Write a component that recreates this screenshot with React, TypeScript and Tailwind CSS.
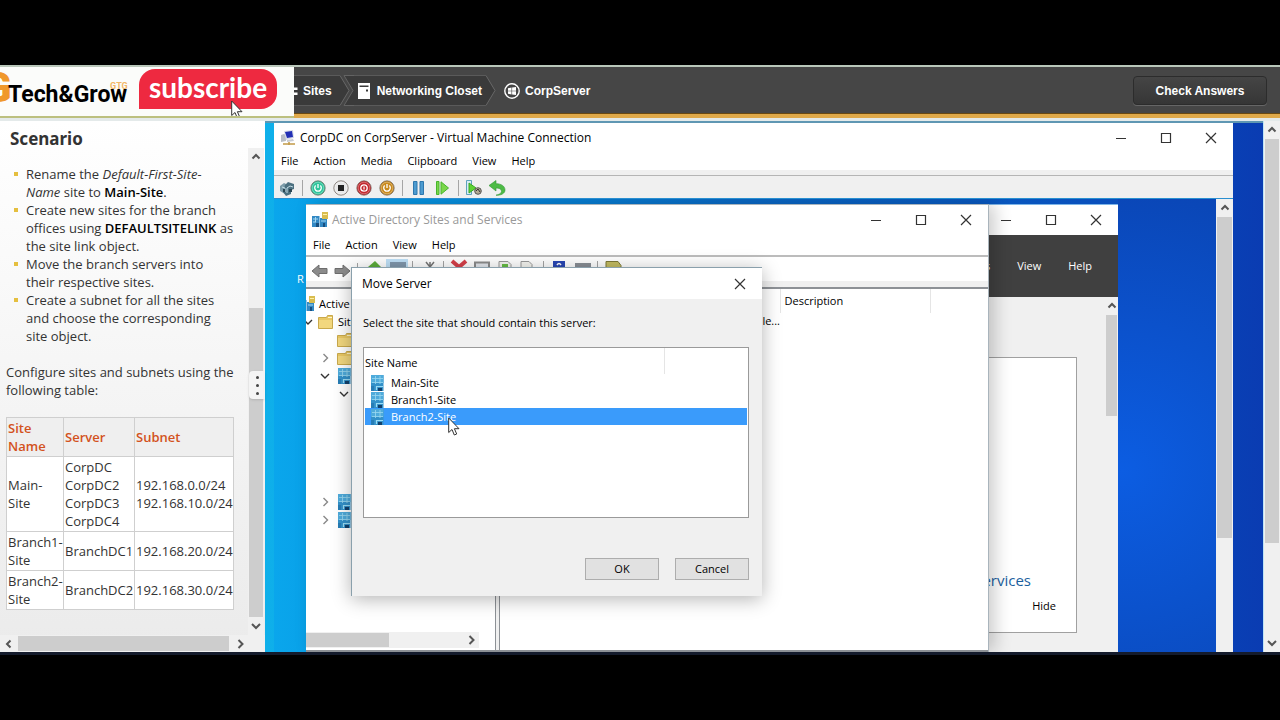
import { useState } from "react";
import type { ReactNode } from "react";
import clsx from "clsx";

const MENU_VM = ["File", "Action", "Media", "Clipboard", "View", "Help"];
const MENU_MMC = ["File", "Action", "View", "Help"];
const SITES = ["Main-Site", "Branch1-Site", "Branch2-Site"];

const SUBNETS = [
  {
    site: "Main-Site",
    servers: ["CorpDC", "CorpDC2", "CorpDC3", "CorpDC4"],
    subnets: ["192.168.0.0/24", "192.168.10.0/24"],
  },
  { site: "Branch1-Site", servers: ["BranchDC1"], subnets: ["192.168.20.0/24"] },
  { site: "Branch2-Site", servers: ["BranchDC2"], subnets: ["192.168.30.0/24"] },
];

export default function App() {
  return (
    <div className="h-screen bg-black py-[65px] font-['Open_Sans',sans-serif] text-[11px] leading-4 text-black">
      <div className="flex h-full flex-col overflow-hidden border-b-3 border-[#141b2c] bg-[#e4eaea]">
        <TopBar />
        <div className="flex min-h-0 flex-1 pt-[3px]">
          <ScenarioPanel />
          <LabDesktop />
          <VScroll className="w-[17px] border-l border-[#bfe4f5]" thumb="mb-[91px]" top down />
        </div>
      </div>
    </div>
  );
}

function TopBar() {
  return (
    <header className="flex h-[53px] shrink-0 border-t-2 border-[#b9c7ba] bg-[#464646] font-['Liberation_Sans',sans-serif] text-[12px] font-bold text-white">
      <ChannelLogo />
      <div className="flex min-w-0 flex-1 items-center justify-between border-b-4 border-[#dfa94a] pr-[13px] shadow-[inset_0_-1px_0_#6b4a12]">
        <nav className="flex items-center">
          <a href="#sites" className="flex h-[31px] items-center border-y border-[#5a5a5a] bg-[#3a3a3a] pr-2">
            <svg className="mr-1 h-3 w-[5px]" viewBox="0 0 5 12">
              <path d="M0 2.500h3.500v2.500H0zM0 7.500h3.500V10H0z" fill="#fff" />
            </svg>
            Sites
          </a>
          <CrumbArrow next="#3a3a3a" />
          <a href="#closet" className="flex h-[31px] items-center border-y border-[#5a5a5a] bg-[#3a3a3a] pr-1 pl-1">
            <svg className="mr-[7px] h-4 w-3" viewBox="0 0 12 16">
              <path d="M0 0h12v16H0z" fill="#fff" />
              <path d="M1.500 2.500h9v1.500h-9zM8 6.500h2v2H8z" fill="#3a3a3a" />
            </svg>
            Networking Closet
          </a>
          <CrumbArrow next="none" />
          <a href="#server" className="flex items-center pl-1">
            <svg className="mr-[5px] size-4" viewBox="0 0 16 16">
              <circle cx="8" cy="8" r="7.200" fill="none" stroke="#fff" strokeWidth="1.400" />
              <path d="M4 5.200l3.500-.6v3.100H4zM8.100 4.500L12 3.900v3.800H8.100zM4 8.300h3.500v3.100L4 10.800zM8.100 8.300H12v3.800l-3.900-.6z" fill="#fff" />
            </svg>
            CorpServer
          </a>
        </nav>
        <button className="h-[29px] w-[134px] rounded-sm border border-[#2c2c2c] bg-linear-to-b from-[#454545] to-[#363636] shadow-[0_1px_0_#666]">
          Check Answers
        </button>
      </div>
    </header>
  );
}

function CrumbArrow({ next }: { next: string }) {
  return (
    <svg className="h-[31px] w-[14px] shrink-0" viewBox="0 0 14 31">
      <path d="M0 0L9 15.500L0 31z" fill="#3a3a3a" />
      <path d="M4 0H14V31H4L13 15.500z" fill={next} />
      <path d="M0 .5L9 15.500L0 30.500" fill="none" stroke="#686868" />
      {next !== "none" && (
        <path d="M14 .5H4L13 15.500L4 30.500H14" fill="none" stroke="#636363" />
      )}
    </svg>
  );
}

function ChannelLogo() {
  return (
    <div className="relative flex w-[294px] shrink-0 items-center overflow-hidden border-b-2 border-[#bcc07f] bg-[#fbfcfa] text-black">
      <span className="absolute -top-[3px] -left-[17px] font-['Roboto',sans-serif] text-[42px] leading-12 font-black text-[#f0982b]">
        G
      </span>
      <span className="relative pt-[6px] pl-[8px] font-['Roboto',sans-serif] text-[23px] leading-7">
        Tech&amp;Grow
      </span>
      <span className="absolute top-[11px] left-[110px] font-['Roboto',sans-serif] text-[9px] text-[#f2b768]">
        GTG
      </span>
      <button className="absolute top-[2px] left-[139px] h-10 w-[138px] rounded-[16px] rounded-bl-none bg-[#ee2940] pb-1 font-['Lato',sans-serif] text-[28px] leading-8 text-white">
        subscribe
      </button>
      <Cursor className="absolute top-[33px] left-[231px]" />
    </div>
  );
}

function ScenarioPanel() {
  return (
    <aside className="flex w-[265px] shrink-0 flex-col bg-linear-to-b from-white to-[#ebebeb] text-[13px] leading-[18px] text-[#333]">
      <h1 className="h-[27px] shrink-0 pt-[9px] pl-[10px] font-['Noto_Sans',sans-serif] text-[17px] font-bold">
        Scenario
      </h1>
      <div className="flex min-h-0 flex-1">
        <div className="flex w-[248px] flex-col">
          <div className="min-h-0 flex-1 overflow-hidden pt-[17px] pr-[13px] pl-[6px]">
            <ul className="pl-5">
              <Bullet>
                Rename the <em>Default-First-Site-Name</em> site to <Strong>Main-Site</Strong>.
              </Bullet>
              <Bullet>
                Create new sites for the branch offices using <Strong>DEFAULTSITELINK</Strong> as the
                site link object.
              </Bullet>
              <Bullet>Move the branch servers into their respective sites.</Bullet>
              <Bullet>
                Create a subnet for all the sites and choose the corresponding site object.
              </Bullet>
            </ul>
            <p className="mt-[18px] mb-[18px]">Configure sites and subnets using the following table:</p>
            <SubnetTable />
          </div>
          <HScroll className="h-[17px]" thumb="mr-[6px]" left />
        </div>
        <div className="relative flex w-[17px] flex-col">
          <VScroll className="w-4 flex-1" thumb="mt-[142px]" top down />
          <div className="h-[17px] bg-[#f0f0f0]" />
          <div className="absolute top-[223px] left-px flex h-7 w-4 flex-col items-center justify-center gap-[5px] rounded-l-sm bg-[#f4f4f4] shadow-sm">
            <i className="size-[3px] rounded-full bg-[#444]" />
            <i className="size-[3px] rounded-full bg-[#444]" />
            <i className="size-[3px] rounded-full bg-[#444]" />
          </div>
        </div>
      </div>
    </aside>
  );
}

function Bullet({ children }: { children: ReactNode }) {
  return (
    <li className="relative before:absolute before:top-[7px] before:-left-3 before:size-1 before:bg-[#e5bf3f]">
      {children}
    </li>
  );
}

function Strong({ children }: { children: ReactNode }) {
  return <strong className="font-semibold text-black">{children}</strong>;
}

function SubnetTable() {
  const cell = "border border-[#cfcfcf] p-px text-left";
  return (
    <table className="w-[228px] table-fixed border-collapse bg-white">
      <thead className="bg-[#efefef] text-[#d3521d]">
        <tr>
          <th className={clsx(cell, "w-[57px] font-semibold")}>Site Name</th>
          <th className={clsx(cell, "w-[71px] font-semibold")}>Server</th>
          <th className={clsx(cell, "font-semibold")}>Subnet</th>
        </tr>
      </thead>
      <tbody>
        {SUBNETS.map((row) => (
          <tr key={row.site}>
            <td className={cell}>{row.site}</td>
            <td className={cell}>
              {row.servers.map((s) => (
                <div key={s}>{s}</div>
              ))}
            </td>
            <td className={cell}>
              {row.subnets.map((s) => (
                <div key={s}>{s}</div>
              ))}
            </td>
          </tr>
        ))}
      </tbody>
    </table>
  );
}

function LabDesktop() {
  return (
    <main className="flex min-w-0 flex-1 border-t-2 border-[#5f97b3] bg-linear-to-r from-[#0fb0ea] via-[#0c6ed6] to-[#0a3cb2] pr-[30px] pl-[9px]">
      <section className="flex min-w-0 flex-1 flex-col bg-white">
        <div className="flex h-[29px] shrink-0 items-center pl-[6px]">
          <VmIcon />
          <h2 className="flex-1 pl-1 text-[12px]">CorpDC on CorpServer - Virtual Machine Connection</h2>
          <WindowButtons />
        </div>
        <MenuBar items={MENU_VM} className="h-[17px] pl-[7px]" />
        <div className="mt-px h-[6px] shrink-0 border-b border-[#b5b5b5] bg-[#f0f0f0]" />
        <VmToolbar />
        <div className="flex min-h-0 flex-1 border-t border-[#2a8fd0]">
          <RemoteScreen />
          <VScroll className="w-[17px]" thumb="mb-[114px]" top />
        </div>
      </section>
    </main>
  );
}

function RemoteScreen() {
  return (
    <div className="relative min-w-0 flex-1 overflow-hidden bg-linear-to-r from-[#0aa6ec] via-[#0a68c4] to-[#0b47ba]">
      <div className="absolute inset-y-0 right-0 w-[98px] bg-radial-[circle_at_5%_60%] from-[#0c5de2] to-[#0a46b6]" />
      <span className="absolute top-[72px] left-[23px] text-white">R</span>
      <ServerManager />
      <SitesAndServices />
    </div>
  );
}

function ServerManager() {
  return (
    <section className="absolute top-[5px] -bottom-2 left-[644px] flex w-[200px] flex-col overflow-hidden border-t border-[#7db5e8] bg-[#f0f0f0]">
      <div className="flex h-[30px] shrink-0 justify-end bg-white">
        <WindowButtons />
      </div>
      <div className="flex h-[62px] shrink-0 items-center justify-end gap-[27px] bg-[#404040] pr-[26px] text-white">
        <button>Tools</button>
        <button>View</button>
        <button>Help</button>
      </div>
      <div className="flex min-h-0 flex-1">
        <div className="flex flex-1 flex-col pt-[60px] pr-7">
          <div className="flex h-[276px] flex-col items-end justify-end border border-[#a0a0a0] bg-white pb-[18px]">
            <h3 className="pr-[45px] text-[15px] leading-5 text-[#1c5f9e]">Services</h3>
            <button className="mt-2 pr-5">Hide</button>
          </div>
        </div>
        <VScroll className="w-[13px]" thumb="mb-[244px]" top />
      </div>
    </section>
  );
}

function SitesAndServices() {
  return (
    <section className="absolute top-[5px] bottom-0 left-8 flex w-[683px] flex-col border-t border-r border-[#a9b4bc] bg-white shadow-[6px_0_16px_rgba(0,0,0,0.2)]">
      <div className="flex h-[30px] shrink-0 items-center pl-[6px]">
        <SitesIcon />
        <h2 className="flex-1 pl-1 text-[12px] text-[#999]">Active Directory Sites and Services</h2>
        <WindowButtons />
      </div>
      <MenuBar items={MENU_MMC} className="h-[22px] border-b-2 border-[#bcbcbc] pl-[7px]" />
      <MmcToolbar />
      <div className="flex min-h-0 flex-1 gap-[3px] border-y-2 border-[#8d9196] bg-[#f0f0f0]">
        <SiteTree />
        <div className="min-w-0 flex-1 border-l border-[#8d9196] bg-white">
          <table className="w-full table-fixed">
            <thead>
              <tr className="h-6 text-left">
                <th className="w-[280px] border-r border-[#e5e5e5]" />
                <th className="w-[150px] border-r border-[#e5e5e5] pl-1 font-normal">Description</th>
                <th />
              </tr>
            </thead>
            <tbody>
              <tr className="text-right">
                <td>le...</td>
                <td />
                <td />
              </tr>
            </tbody>
          </table>
        </div>
      </div>
      <MoveServerDialog />
    </section>
  );
}

function SiteTree() {
  return (
    <div className="flex w-[190px] shrink-0 flex-col border-r border-[#8d9196] bg-white">
      <div className="min-h-0 flex-1 overflow-hidden pt-[6px]">
        <TreeRow>
          <SitesIcon className="-ml-[7px]" />
          <span className="pl-1">Active Directory Sites</span>
        </TreeRow>
        <TreeRow>
          <Arrow dir="down" className="-ml-1 w-3 text-[#333]" />
          <Folder className="ml-1" />
          <span className="pl-1">Sites</span>
        </TreeRow>
        <TreeRow className="pl-[31px]">
          <Folder />
        </TreeRow>
        <TreeRow className="pl-[14px]">
          <Arrow dir="right" className="mr-[7px] text-[#888]" />
          <Folder />
        </TreeRow>
        <TreeRow className="pl-[14px]">
          <Arrow dir="down" className="mr-2 text-[#333]" />
          <SiteIcon />
        </TreeRow>
        <TreeRow className="mb-[90px] pl-[33px]">
          <Arrow dir="down" className="text-[#333]" />
        </TreeRow>
        <TreeRow className="pl-[14px]">
          <Arrow dir="right" className="mr-2 text-[#888]" />
          <SiteIcon />
        </TreeRow>
        <TreeRow className="pl-[14px]">
          <Arrow dir="right" className="mr-2 text-[#888]" />
          <SiteIcon />
        </TreeRow>
      </div>
      <HScroll className="mr-4 mb-[2px] h-4" thumb="mr-[77px]" />
    </div>
  );
}

function TreeRow({ children, className }: { children: ReactNode; className?: string }) {
  return <div className={clsx("flex h-[18px] items-center whitespace-nowrap", className)}>{children}</div>;
}

function MoveServerDialog() {
  const [selected, setSelected] = useState("Branch2-Site");
  return (
    <div
      role="dialog"
      aria-label="Move Server"
      className="absolute top-[62px] left-[45px] w-[411px] border-t border-l border-[#8aa0ac] bg-[#f0f0f0] shadow-[0_3px_18px_rgba(0,0,0,0.3)]"
    >
      <div className="flex h-[31px] items-center justify-between bg-white pl-[10px]">
        <h3 className="text-[12px]">Move Server</h3>
        <button aria-label="Close" className="flex w-11 justify-center">
          <CloseGlyph />
        </button>
      </div>
      <div className="pt-4 pr-[13px] pb-4 pl-[11px]">
        <p id="site-label">Select the site that should contain this server:</p>
        <div className="mt-4 h-[171px] border border-[#9a9a9a] bg-white px-px">
          <div className="flex h-[26px] items-center">
            <span className="flex h-full w-[300px] items-center border-r border-[#e5e5e5] pt-[3px]">Site Name</span>
          </div>
          <div role="listbox" aria-labelledby="site-label">
            {SITES.map((site) => (
              <button
                key={site}
                role="option"
                aria-selected={site === selected}
                onClick={() => setSelected(site)}
                className={clsx(
                  "flex h-[17px] w-full items-center gap-[7px] pl-[6px]",
                  site === selected && "bg-[#3a9bfb] text-white"
                )}
              >
                <SiteIcon />
                {site}
              </button>
            ))}
          </div>
        </div>
        <div className="mt-10 flex justify-end gap-4">
          <button className="h-[22px] w-[74px] border border-[#adadad] bg-[#e1e1e1]">OK</button>
          <button className="h-[22px] w-[74px] border border-[#adadad] bg-[#e1e1e1]">Cancel</button>
        </div>
      </div>
      <Cursor className="absolute top-[149px] left-[96px]" />
    </div>
  );
}

function MenuBar({ items, className }: { items: string[]; className: string }) {
  return (
    <div className={clsx("flex shrink-0 items-center gap-[15px]", className)}>
      {items.map((item) => (
        <button key={item}>{item}</button>
      ))}
    </div>
  );
}

function WindowButtons() {
  return (
    <div className="flex shrink-0 items-center">
      <button aria-label="Minimize" className="flex w-[45px] justify-center">
        <svg className="size-3" viewBox="0 0 12 12">
          <path d="M1 6.500h10" stroke="#333" />
        </svg>
      </button>
      <button aria-label="Maximize" className="flex w-[45px] justify-center">
        <svg className="size-3" viewBox="0 0 12 12">
          <path d="M1.500 1.500h9v9h-9z" fill="none" stroke="#333" strokeWidth="1.200" />
        </svg>
      </button>
      <button aria-label="Close" className="flex w-[45px] justify-center">
        <CloseGlyph />
      </button>
    </div>
  );
}

function CloseGlyph() {
  return (
    <svg className="size-3" viewBox="0 0 12 12">
      <path d="M1 1l10 10M11 1L1 11" stroke="#333" strokeWidth="1.200" />
    </svg>
  );
}

function VScroll({
  className,
  thumb,
  top,
  down,
}: {
  className: string;
  thumb: string;
  top?: boolean;
  down?: boolean;
}) {
  return (
    <div className={clsx("flex shrink-0 flex-col items-stretch bg-[#f0f0f0]", className)}>
      {top && <Arrow dir="up" bold className="mx-auto my-1 shrink-0 text-[#555]" />}
      <div className={clsx("mx-px flex-1 bg-[#cdcdcd]", thumb)} />
      {down && <Arrow dir="down" bold className="mx-auto my-1 shrink-0 text-[#555]" />}
    </div>
  );
}

function HScroll({ className, thumb, left }: { className: string; thumb: string; left?: boolean }) {
  return (
    <div className={clsx("flex shrink-0 items-center bg-[#f0f0f0]", className)}>
      {left && <Arrow dir="left" bold className="mx-1 shrink-0 text-[#555]" />}
      <div className={clsx("h-full flex-1 border-y border-[#f0f0f0] bg-[#cdcdcd]", thumb)} />
      <Arrow dir="right" bold className="mr-[3px] shrink-0 text-[#555]" />
    </div>
  );
}

const ARROWS = {
  up: "M1.500 6.500L5 3L8.500 6.500",
  down: "M1 3L5 7L9 3",
  left: "M6.500 1.500L3 5L6.500 8.500",
  right: "M3.500 1L7.500 5L3.500 9",
};

function Arrow({ dir, bold, className }: { dir: keyof typeof ARROWS; bold?: boolean; className?: string }) {
  return (
    <svg className={clsx("size-[10px]", className)} viewBox="0 0 10 10">
      <path d={ARROWS[dir]} fill="none" stroke="currentColor" strokeWidth={bold ? 2 : 1.4} />
    </svg>
  );
}

function VmToolbar() {
  return (
    <div className="flex h-[22px] shrink-0 items-center bg-[#f0f0f0] pt-[2px] pl-[5px]">
      <svg className="size-4" viewBox="0 0 16 16">
        <path d="M1 6l4-3 4 2v6l-3 3-5-3z" fill="#7c9ba8" />
        <path d="M6 5l3-3 6 2v5l-3 1v4l-5 2-3-4z" fill="#4c7080" />
        <path d="M3 7l3 1v4M8 8l3-2 3 1M8 8v5" stroke="#c4dde6" fill="none" />
        <path d="M10 9h3v3h-3zM4 9h2v3H4z" fill="#2b4552" />
      </svg>
      <Divider className="mx-[7px]" />
      <RoundButton color="#2fc59b">
        <path d="M8 4v4M5.700 5.500a3.300 3.300 0 1 0 4.600 0" stroke="#fff" strokeWidth="1.300" fill="none" />
      </RoundButton>
      <RoundButton color="#e8e8e8">
        <path d="M5 5h6v6H5z" fill="#222" />
      </RoundButton>
      <RoundButton color="#c4282e">
        <circle cx="8" cy="8" r="3.200" stroke="#fff" strokeWidth="1.300" fill="none" />
        <path d="M8 6.500v3" stroke="#fff" strokeWidth="1.200" />
      </RoundButton>
      <RoundButton color="#c98a1d">
        <path d="M8 4v4M5.700 5.500a3.300 3.300 0 1 0 4.600 0" stroke="#fff" strokeWidth="1.300" fill="none" />
      </RoundButton>
      <Divider className="mr-[10px] ml-0" />
      <svg className="h-[14px] w-[11px]" viewBox="0 0 11 14">
        <path d="M.5.5h3.500v13H.5zM7 .5h3.500v13H7z" fill="#4c9bd0" stroke="#2f77ad" />
      </svg>
      <svg className="ml-3 h-[14px] w-[13px]" viewBox="0 0 13 14">
        <path d="M.5.500h2.500v13H.5zM5 .800L12.500 7L5 13.200z" fill="#7ad64a" stroke="#46b52d" />
      </svg>
      <Divider className="mr-[7px] ml-[9px]" />
      <svg className="size-4" viewBox="0 0 16 16">
        <path d="M.5.500h5v14h-5z" fill="#d8ecf6" stroke="#5fa2bd" />
        <path d="M3 3l7 5-7 5z" fill="#5ed334" stroke="#38a825" />
        <circle cx="12" cy="11" r="3.300" fill="#b5aa94" stroke="#555" />
        <path d="M10 11l2-2 2 3" stroke="#333" fill="none" />
      </svg>
      <svg className="ml-[7px] h-4 w-[17px]" viewBox="0 0 17 16">
        <path d="M0 5.500L7 .5v3.200c5 0 9 2.300 9 6.300 0 3.500-4 5.500-9 5.200 4-1 5.500-2.300 5.500-4C12.500 9 10 8 7 8v3z" fill="#4dbb45" stroke="#2f9633" strokeWidth=".6" />
      </svg>
    </div>
  );
}

function RoundButton({ color, children }: { color: string; children: ReactNode }) {
  return (
    <svg className="mr-[7px] size-4" viewBox="0 0 16 16">
      <circle cx="8" cy="8" r="7.200" fill={color} stroke="#6b5f58" strokeOpacity=".7" />
      <circle cx="8" cy="8" r="5.800" fill="none" stroke="#fff" strokeOpacity=".3" />
      {children}
    </svg>
  );
}

function Divider({ className }: { className?: string }) {
  return <i className={clsx("h-4 w-px bg-[#a5a5a5]", className)} />;
}

function MmcToolbar() {
  return (
    <div className="flex h-[30px] shrink-0 items-start border-b-6 border-[#f0f0f0] bg-white pt-[6px] pl-[5px]">
      <svg className="h-4 w-[17px]" viewBox="0 0 17 16">
        <path d="M1 8l7-6v3.500h8v5H8V14z" fill="#8b8b8b" stroke="#6d6d6d" />
      </svg>
      <svg className="ml-[6px] h-4 w-[17px]" viewBox="0 0 17 16">
        <path d="M16 8L9 2v3.500H1v5h8V14z" fill="#8b8b8b" stroke="#6d6d6d" />
      </svg>
      <Divider className="mr-2 ml-[6px]" />
      <svg className="-mt-1 h-4 w-[260px]" viewBox="0 0 260 16">
        <path d="M2 8l7-6 6 6z" fill="#5cae3c" />
        <path d="M20 0h22v16H20z" fill="#bfe0f7" />
        <path d="M24 3h16v9H24z" fill="#8198ad" />
        <path d="M46.500 2v14M77.500 2v14M177.500 2v14M231.500 2v14" stroke="#a5a5a5" />
        <path d="M60 3l4 5 4-5M64 3v5" stroke="#777" strokeWidth="1.500" fill="none" />
        <path d="M86 2l7 6 7-6" stroke="#d6404a" strokeWidth="4" fill="none" />
        <path d="M109 3.500h14v11h-14z" fill="#e4e8ee" stroke="#8c8c8c" strokeWidth="2" />
        <path d="M133 2.500h9l3 3v10h-12zM155 2.500h8l3 3v10h-11z" fill="#f5f5f0" stroke="#999" />
        <path d="M136 5h6v4h-6z" fill="#66be45" />
        <path d="M187 2h12v14h-12z" fill="#2947b5" />
        <path d="M191 6q2-3 4 0" stroke="#fff" strokeWidth="1.500" fill="none" />
        <path d="M209 4h16v10h-16z" fill="#8a8f96" />
        <path d="M240 2.500h12l3 4v8h-15z" fill="#c4bc62" stroke="#7c7836" />
      </svg>
    </div>
  );
}

function VmIcon() {
  return (
    <svg className="size-4" viewBox="0 0 16 16">
      <path d="M1 5l3-1 2 1v6l-5 1z" fill="#b8bec6" />
      <path d="M4 1l9-1 1 8-8 2z" fill="#d7dbe6" />
      <path d="M5 2l7-1 1 6-6 1z" fill="#2230b5" />
      <path d="M7 10l6-1 1 2-7 1z" fill="#c6cad2" />
      <path d="M3 14h12M9 12v3" stroke="#c29a48" strokeWidth="1.500" />
    </svg>
  );
}

function SitesIcon({ className }: { className?: string }) {
  return (
    <svg className={clsx("size-4 shrink-0", className)} viewBox="0 0 16 16">
      <path d="M0 4h7.500v11H0zM8 6h7v9H8z" fill="#3389c4" />
      <path d="M1 7h5M1 10h3M3.500 5v5M9 9h5" stroke="#a5d8f2" />
      <path d="M4 11h3v4H4zM11 11h2v4h-2z" fill="#174f80" />
      <path d="M10 0h6v7h-6z" fill="#d9bd50" />
      <path d="M11 2.500h4" stroke="#fff1a8" />
    </svg>
  );
}

function SiteIcon() {
  return (
    <svg className="h-4 w-[13px] shrink-0" viewBox="0 0 13 16">
      <path d="M0 0h12.500v16H0z" fill="#3391c9" />
      <path d="M0 0h12.500v8H0z" fill="#4fabdb" />
      <path d="M1 3.500h11M1 7.500h11M4.500 1v8M9 1v8" stroke="#9ad8f0" strokeWidth=".8" />
      <path d="M5.500 11.500h6.500M5.500 11v4" stroke="#9bdcf4" strokeWidth="1.200" />
      <path d="M7 13h4v3H7z" fill="#12406b" />
      <path d="M0 11h3v5H0z" fill="#277db5" />
    </svg>
  );
}

function Folder({ className }: { className?: string }) {
  return (
    <svg className={clsx("h-[14px] w-4 shrink-0", className)} viewBox="0 0 16 14">
      <path d="M.5 2.500h8l1-2h5v13H.5z" fill="#e9c864" stroke="#c9a94c" />
      <path d="M1 5h13v8H1z" fill="#f2d77e" />
      <path d="M10 2.500h4" stroke="#fff6cf" />
    </svg>
  );
}

function Cursor({ className }: { className?: string }) {
  return (
    <svg className={clsx("pointer-events-none h-[19px] w-3", className)} viewBox="0 0 12 19">
      <path d="M.7 1v14.500l3.300-3 2.300 5.500 2.400-1-2.300-5.300h4.600z" fill="#fff" stroke="#333" />
    </svg>
  );
}
